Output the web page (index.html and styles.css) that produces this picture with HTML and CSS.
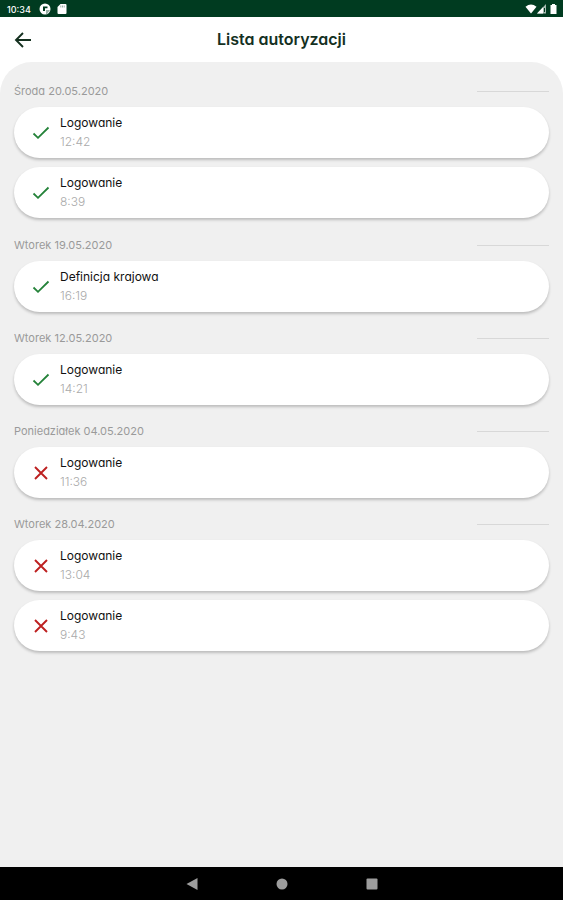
FILE: index.html
```html
<!DOCTYPE html>
<html lang="pl">
<head>
<meta charset="utf-8">
<meta name="viewport" content="width=device-width, initial-scale=1">
<title>Lista autoryzacji</title>
<link rel="stylesheet" href="styles.css">
</head>
<body>
<svg class="sprite" aria-hidden="true">
  <symbol id="check" viewBox="0 0 18 16"><path d="M1.5 8.500 6 12.800 16.500 2.500" fill="none" stroke="#248239" stroke-width="1.8"/></symbol>
  <symbol id="cross" viewBox="0 0 18 16"><path d="M3 2 15 14M15 2 3 14" fill="none" stroke="#bd2020" stroke-width="1.9"/></symbol>
</svg>
<div class="status">
  <span class="clock">10:34</span>
  <svg width="12" height="12" viewBox="0 0 12 12"><circle cx="6" cy="6" r="5.500" fill="#fff"/><path d="M4 3.500h4.500v1.800H6V8H4z" fill="#003b20"/><path d="M7 7h4L8 11H7z" fill="#003b20" opacity=".4"/></svg>
  <svg width="10" height="12" viewBox="0 0 10 12"><path d="M3.500 1H8.500q1 0 1 1v8q0 1-1 1h-7q-1 0-1-1V4z" fill="#fff"/><path d="M3.800 2.500v2M5.500 2.500v2M7.200 2.500v2" stroke="#003b20" stroke-width=".4"/></svg>
  <svg class="signals" width="34" height="12" viewBox="0 0 34 12"><path d="M.5 3.800Q6 -.8 11.500 3.800L6 10.500z" fill="#fff"/><path d="M12 10.500 21 1v9.500z" fill="#fff" opacity=".65"/><path d="M12 10.500 18 4.200v6.300z" fill="#fff"/><path d="M19.500 5v4" stroke="#003b20"/><path d="M25.500 2h1.500V1h3v1h1.500v9h-6z" fill="#fff"/></svg>
</div>
<header class="topbar">
  <button class="back" type="button" aria-label="Wstecz"><svg width="18" height="16" viewBox="0 0 18 16"><path d="M17 8H2M9 1 2 8l7 7" fill="none" stroke="#14301f" stroke-width="1.900"/></svg></button>
  <h1>Lista autoryzacji</h1>
</header>
<main class="sheet">
  <section>
    <h2>Środa 20.05.2020</h2>
    <ul>
      <li><svg class="icon"><use href="#check"/></svg><div><h3>Logowanie</h3><time>12:42</time></div></li>
      <li><svg class="icon"><use href="#check"/></svg><div><h3>Logowanie</h3><time>8:39</time></div></li>
    </ul>
  </section>
  <section>
    <h2>Wtorek 19.05.2020</h2>
    <ul>
      <li><svg class="icon"><use href="#check"/></svg><div><h3>Definicja krajowa</h3><time>16:19</time></div></li>
    </ul>
  </section>
  <section>
    <h2>Wtorek 12.05.2020</h2>
    <ul>
      <li><svg class="icon"><use href="#check"/></svg><div><h3>Logowanie</h3><time>14:21</time></div></li>
    </ul>
  </section>
  <section>
    <h2>Poniedziałek 04.05.2020</h2>
    <ul>
      <li><svg class="icon"><use href="#cross"/></svg><div><h3>Logowanie</h3><time>11:36</time></div></li>
    </ul>
  </section>
  <section>
    <h2>Wtorek 28.04.2020</h2>
    <ul>
      <li><svg class="icon"><use href="#cross"/></svg><div><h3>Logowanie</h3><time>13:04</time></div></li>
      <li><svg class="icon"><use href="#cross"/></svg><div><h3>Logowanie</h3><time>9:43</time></div></li>
    </ul>
  </section>
</main>
<nav class="system">
  <button type="button" aria-label="Wstecz"><svg width="12" height="12" viewBox="0 0 12 12"><path d="M11.500 0v12L.5 6z"/></svg></button>
  <button type="button" aria-label="Ekran główny"><svg width="12" height="12" viewBox="0 0 12 12"><circle cx="6" cy="6" r="5.500"/></svg></button>
  <button type="button" aria-label="Ostatnie"><svg width="12" height="12" viewBox="0 0 12 12"><rect x=".5" y=".5" width="11" height="11" rx="1"/></svg></button>
</nav>
</body>
</html>
```
FILE: styles.css
```css
* { box-sizing: border-box; }
body {
  margin: 0;
  min-height: 100vh;
  display: flex;
  flex-direction: column;
  background: #fff;
  font-family: Inter, "Liberation Sans", sans-serif;
  font-feature-settings: "cv11";
}
h1, h2, h3, ul { margin: 0; padding: 0; }
svg { display: block; flex: none; }
button { border: 0; padding: 0; background: none; }
.sprite { width: 0; height: 0; position: absolute; }
.status {
  display: flex;
  align-items: center;
  gap: 6px;
  height: 17px;
  padding: 1px 4px 0 7px;
  background: #003b20;
  color: #fff;
}
.clock { width: 26px; font-size: 9px; font-weight: 500; }
.signals { margin-left: auto; }
.topbar {
  display: grid;
  grid-template-columns: 32px 1fr 32px;
  align-items: center;
  height: 45px;
}
.back { display: flex; justify-content: flex-end; }
h1 {
  padding-bottom: 2px;
  text-align: center;
  font-size: 16px;
  line-height: 24px;
  font-weight: 600;
  color: #14301f;
}
.sheet {
  flex: 1;
  padding: 21px 14px 24px;
  background: #f0f0f0;
  border-radius: 32px 32px 0 0;
}
section + section { margin-top: 18px; }
h2 {
  display: flex;
  justify-content: space-between;
  align-items: center;
  margin-bottom: 8px;
  font-size: 11px;
  line-height: 16px;
  font-weight: 400;
  color: #9a9a9a;
}
h2::after { content: ""; width: 72px; height: 1px; background: #d8d8d8; }
ul { display: grid; gap: 9px; list-style: none; }
li {
  display: flex;
  align-items: center;
  gap: 10px;
  height: 51px;
  padding-left: 18px;
  border-radius: 26px;
  background: #fff;
  box-shadow: 0 2px 3px rgba(0, 0, 0, .22);
}
section:first-child { padding-bottom: 1px; }
.icon { width: 18px; height: 16px; }
h3 { font-size: 12px; line-height: 18px; font-weight: 400; color: #111; }
time { display: block; font-size: 12px; line-height: 20px; color: #aaa; font-weight: 300; }
.system {
  display: flex;
  justify-content: center;
  align-items: center;
  gap: 78px;
  height: 33px;
  background: #000;
  fill: #9d9d9d;
}
```
